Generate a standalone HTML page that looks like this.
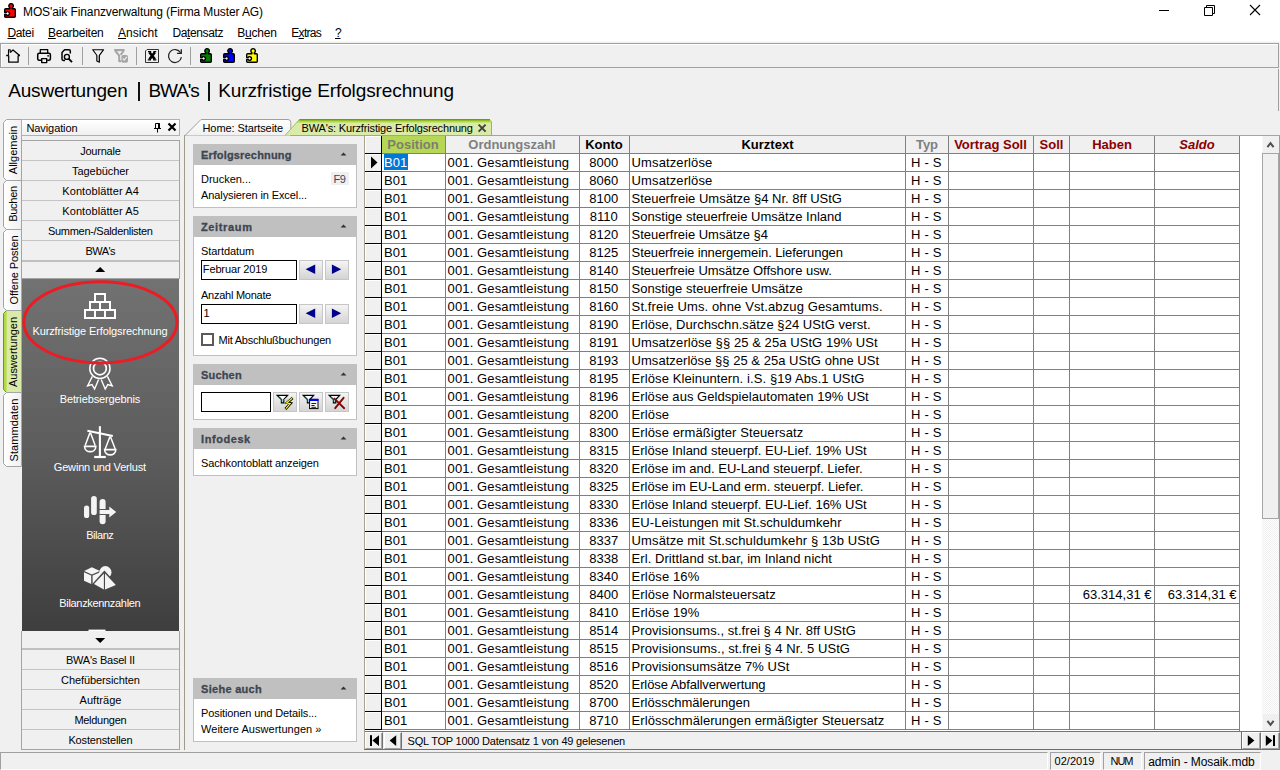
<!DOCTYPE html>
<html><head><meta charset="utf-8"><title>MOS'aik Finanzverwaltung</title>
<style>
html,body{margin:0;padding:0;}
body{width:1280px;height:770px;overflow:hidden;background:#f0f0f0;position:relative;font-family:"Liberation Sans",sans-serif;}
.a{position:absolute;box-sizing:border-box;}
span.t{position:absolute;white-space:pre;line-height:normal;font-family:"Liberation Sans",sans-serif;}
.sbh{left:193px;width:164px;background:#c0c0c0;}
.sbb{left:193px;width:164px;background:#fff;border:1px solid #c0c0c0;border-top:none;}
.hl{left:365px;width:875px;height:1px;background:#808080;}
.vl{top:136px;width:1px;height:595px;background:#808080;}
.btn{background:linear-gradient(#f4f4f4,#d4d4d4);border:1px solid #c6c6c6;}
.inp{background:#fff;border:1px solid #000;}
</style></head><body>
<!-- title + menu -->
<div class="a" style="left:0;top:0;width:1280px;height:41px;background:#fff"></div>
<div class="a" style="left:0;top:41px;width:1280px;height:1px;background:#f8f8f8"></div>
<!-- toolbar frame -->
<div class="a" style="left:0;top:43px;width:1279px;height:25px;border:1px solid #a0a0a0;background:#f0f0f0;box-shadow:inset 1px 1px 0 #fff"></div>
<!-- header title panel right edge -->
<div class="a" style="left:1278px;top:69px;width:1px;height:42px;background:#a0a0a0"></div>
<!-- app icon -->
<svg class="a" style="left:4px;top:3px" width="13" height="16" viewBox="0 0 13 16"><path d="M1.7 5.7H5.9V4.8A2.25 2.25 0 1 1 8.3 4.8V5.7H10.3Q11.3 5.7 11.3 6.7V13.3Q11.3 14.3 10.3 14.3H1.7Q0.7 14.3 0.7 13.3V11.5H2.1A1.85 1.85 0 1 0 2.1 9.5H0.7V6.7Q0.7 5.7 1.7 5.7Z" fill="#f00" stroke="#000" stroke-width="1.4" stroke-linejoin="round"/></svg>
<!-- window controls -->
<svg class="a" style="left:1150px;top:0" width="120" height="22" viewBox="0 0 120 22">
 <path d="M9 10.5H19" stroke="#000" stroke-width="1"/>
 <path d="M54.5 7.5H62.5V15.5H54.5zM56.5 7.5V5.5H64.5V13.5H62.5" fill="none" stroke="#000" stroke-width="1"/>
 <path d="M100 5L110 15M110 5L100 15" stroke="#000" stroke-width="1.1"/>
</svg>
<!-- toolbar icons -->
<svg class="a" style="left:0;top:44px" width="280" height="23" viewBox="0 0 280 23">
 <g fill="none" stroke="#000" stroke-linejoin="round">
  <!-- home -->
  <path d="M8.7 11.4V18.2H18.1V11.4" stroke-width="1.25"/><path d="M6.2 11.5H8.7M18.1 11.5H19.9" stroke-width="1.3"/><path d="M8.5 11.4V5.8H10.2V8.4" stroke-width="1.1"/><path d="M10.3 8.5L13 5.9L19.6 11.4" stroke-width="1.3"/>
  <!-- sep -->
  <path d="M28.5 3V21M82.5 3V21M136.5 3V21M190.5 3V21" stroke="#a0a0a0" stroke-width="1"/>
  <!-- printer -->
  <path d="M40.3 9.2V5.7H47.7V9.2" stroke-width="1.3"/><path d="M41 16.3H39.2Q37.7 16.3 37.7 14.8V10.7Q37.7 9.2 39.2 9.2H48.9Q50.4 9.2 50.4 10.7V14.8Q50.4 16.3 48.9 16.3H47.2" stroke-width="1.5"/><rect x="41.7" y="14.6" width="5" height="4" fill="#f0f0f0" stroke-width="1.4"/><circle cx="48.1" cy="11.8" r="0.9" fill="#000" stroke="none"/>
  <!-- preview -->
  <path d="M65 16.4H63.4Q62 16.4 62 15V8.4L64.6 5.7H69Q70.3 5.7 70.3 7V9.6" stroke-width="1.5"/><circle cx="66.9" cy="12.9" r="2.5" stroke-width="1.4"/><path d="M68.8 14.8L72 18.2" stroke-width="1.9"/>
  <!-- funnel -->
  <path d="M97.4 11.6H98.8V17.6L97.4 17z" fill="#b4b4b4" stroke="none"/><path d="M92.7 5.7H103.6L99.4 11.3V18.3L96.8 17.1V11.3z" stroke-width="1.1"/>
  <!-- disabled funnel -->
  <g stroke="#a6a6a6"><path d="M114.2 6.1H124.6" stroke-width="2.2"/><path d="M115.4 7L119.2 11.6V17.2H121.6M123.6 7L120.6 10.8" stroke-width="2"/><rect x="121.4" y="11.1" width="6.6" height="7.6" rx="1.8" fill="#a6a6a6" stroke="none"/><path d="M122.8 14.6L124.2 16L126.8 12.8" stroke="#f4f4f4" stroke-width="1.1"/></g>
  <!-- X box -->
  <path d="M147 5.5H158.5V18.5H145.5V7z" stroke="#303030" stroke-width="1" fill="#f0f0f0"/><path d="M149.4 8.2L154.9 15.4M154.9 8.2L149.4 15.4" stroke-width="2.6" stroke-linejoin="miter"/><path d="M148 7.7H151.2M153.4 7.7H156.2M147.8 15.9H151M153.2 15.9H156.4" stroke-width="1.2"/>
  <!-- refresh -->
  <path d="M181.4 13.1A6.5 6.5 0 1 1 180.6 8.75" stroke="#222" stroke-width="1.2"/><path d="M181.3 5.2V9.4H177" stroke="#222" stroke-width="1.3" stroke-linejoin="miter"/>
 </g>
 <!-- puzzles -->
 <g stroke="#000" stroke-width="1.4" stroke-linejoin="round">
  <path d="M1.7 5.7H5.9V4.8A2.25 2.25 0 1 1 8.3 4.8V5.7H10.3Q11.3 5.7 11.3 6.7V13.3Q11.3 14.3 10.3 14.3H1.7Q0.7 14.3 0.7 13.3V11.5H2.1A1.85 1.85 0 1 0 2.1 9.5H0.7V6.7Q0.7 5.7 1.7 5.7Z" fill="#008000" transform="translate(200,4)"/>
  <path d="M1.7 5.7H5.9V4.8A2.25 2.25 0 1 1 8.3 4.8V5.7H10.3Q11.3 5.7 11.3 6.7V13.3Q11.3 14.3 10.3 14.3H1.7Q0.7 14.3 0.7 13.3V11.5H2.1A1.85 1.85 0 1 0 2.1 9.5H0.7V6.7Q0.7 5.7 1.7 5.7Z" fill="#0000ff" transform="translate(223,4)"/>
  <path d="M1.7 5.7H5.9V4.8A2.25 2.25 0 1 1 8.3 4.8V5.7H10.3Q11.3 5.7 11.3 6.7V13.3Q11.3 14.3 10.3 14.3H1.7Q0.7 14.3 0.7 13.3V11.5H2.1A1.85 1.85 0 1 0 2.1 9.5H0.7V6.7Q0.7 5.7 1.7 5.7Z" fill="#ffff00" transform="translate(246,4)"/>
 </g>
</svg>
<!-- title separators -->
<div class="a" style="left:138px;top:82px;width:2px;height:19px;background:#111"></div>
<div class="a" style="left:208px;top:82px;width:2px;height:19px;background:#111"></div>

<!-- vertical tabs -->
<svg class="a" style="left:0;top:116px" width="23" height="354" viewBox="0 116 23 354">
<defs><linearGradient id="vt" x1="0" y1="0" x2="1" y2="0"><stop offset="0" stop-color="#fff"/><stop offset="1" stop-color="#f0f0f0"/></linearGradient></defs>
<path d="M21.5 119.5H6.5L3.5 122.5V177.5L6.5 180.5H21.5z" fill="url(#vt)"/>
<path d="M21.5 119.5H6.5L3.5 122.5V177.5L6.5 180.5H21.5" fill="none" stroke="#a4a4a4" stroke-width="1"/>
<path d="M21.5 180.5H6.5L3.5 183.5V226.5L6.5 229.5H21.5z" fill="url(#vt)"/>
<path d="M21.5 180.5H6.5L3.5 183.5V226.5L6.5 229.5H21.5" fill="none" stroke="#a4a4a4" stroke-width="1"/>
<path d="M21.5 229.5H6.5L3.5 232.5V307.5L6.5 310.5H21.5z" fill="url(#vt)"/>
<path d="M21.5 229.5H6.5L3.5 232.5V307.5L6.5 310.5H21.5" fill="none" stroke="#a4a4a4" stroke-width="1"/>
<path d="M21.5 310.5H6.5L3.5 313.5V389.5L6.5 392.5H21.5z" fill="#daeaa8"/>
<path d="M6.6 311.0L4 313.7V389.3L6.6 392.0z" fill="#b2d944"/>
<path d="M6.5 310.5L3.5 313.5V389.5L6.5 392.5" fill="none" stroke="#6a9f00" stroke-width="1"/>
<path d="M21.5 310.5H6.5M6.5 392.5H21.5" fill="none" stroke="#a4a4a4" stroke-width="1"/>
<path d="M21.5 392.5H6.5L3.5 395.5V463.5L6.5 466.5H21.5z" fill="url(#vt)"/>
<path d="M21.5 392.5H6.5L3.5 395.5V463.5L6.5 466.5H21.5" fill="none" stroke="#a4a4a4" stroke-width="1"/>
</svg>
<div class="a" style="left:21px;top:119px;width:1px;height:347px;background:#a8a8a8"></div>
<!-- nav header -->
<div class="a" style="left:21px;top:119px;width:159px;height:17px;border:1px solid #b0b0b0;background:linear-gradient(#fff,#f0f0f0)"></div>
<!-- pin + close -->
<svg class="a" style="left:152px;top:122px" width="26" height="12" viewBox="0 0 26 12">
 <path d="M3.5 1.5h4v5h-4zM2 6.5h7M5.5 6.5v4" fill="none" stroke="#000" stroke-width="1"/><rect x="6" y="1" width="1.6" height="5.5" fill="#000"/>
 <path d="M16.5 1.5l7 7M23.5 1.5l-7 7" stroke="#000" stroke-width="2.2" fill="none"/>
</svg>
<!-- buttons top -->
<div class="a" style="left:21px;top:140px;width:159px;height:139px;border:1px solid #a4a4a4;background:#f0f0f0"></div>
<div class="a" style="left:22px;top:160px;width:157px;height:1px;background:#c4c4c4"></div>
<div class="a" style="left:22px;top:180px;width:157px;height:1px;background:#c4c4c4"></div>
<div class="a" style="left:22px;top:200px;width:157px;height:1px;background:#c4c4c4"></div>
<div class="a" style="left:22px;top:220px;width:157px;height:1px;background:#c4c4c4"></div>
<div class="a" style="left:22px;top:240px;width:157px;height:1px;background:#c4c4c4"></div>
<div class="a" style="left:22px;top:260px;width:157px;height:2px;background:#c0c0c0"></div>
<svg class="a" style="left:94px;top:266px" width="12" height="7"><path d="M1.2 5.9L6.2 0.9L11.2 5.9z" fill="#000"/></svg>
<!-- dark panel -->
<div class="a" style="left:22px;top:279px;width:157px;height:352px;background:linear-gradient(#727272,#5c5c5c 50%,#3e3e3e)"></div>
<svg class="a" style="left:22px;top:279px" width="158" height="352" viewBox="22 279 158 352">
 <!-- boxes pyramid -->
 <g fill="none" stroke="#fff" stroke-width="2">
  <rect x="95" y="294" width="10" height="8"/>
  <rect x="90" y="302" width="10" height="8"/><rect x="100" y="302" width="10" height="8"/>
  <rect x="85" y="310" width="10" height="8"/><rect x="95" y="310" width="10" height="8"/><rect x="105" y="310" width="10" height="8"/>
 </g>
 <!-- award -->
 <g fill="none" stroke="#fff">
  <circle cx="99.9" cy="368.4" r="10.1" stroke-width="1.5"/>
  <circle cx="99.9" cy="368.4" r="6.4" stroke-width="1.7"/>
  <path d="M92.4 376.4L87.6 385.8L92 384.6L94.6 389L98.6 379.6" stroke-width="1.4" stroke-linejoin="miter"/>
  <path d="M107.4 376.4L112.2 385.8L107.8 384.6L105.2 389L101.2 379.6" stroke-width="1.4" stroke-linejoin="miter"/>
 </g>
 <!-- scales -->
 <g fill="none" stroke="#fff" stroke-width="1.7">
  <path d="M99.9 426.2V456" stroke-width="2.1"/>
  <path d="M94.2 457H105.8" stroke-width="2.2"/>
  <path d="M87.4 430.8L112.8 436" stroke-width="2"/>
  <path d="M90 432.5L85.2 445.6M90.4 432.5L95.2 445.6" stroke-width="1.5"/>
  <path d="M84.6 446.4H95.8C95.8 453.4 84.6 453.4 84.6 446.4z" stroke-width="1.6"/>
  <path d="M110 436.6L105.2 449M110.4 436.6L115.2 449" stroke-width="1.5"/>
  <path d="M104.6 449.6H115.8C115.8 456.6 104.6 456.6 104.6 449.6z" stroke-width="1.6"/>
 </g>
 <!-- bilanz -->
 <g fill="#f4f4f4">
  <rect x="84" y="505.5" width="5.2" height="12.6" rx="2.6"/>
  <rect x="91.1" y="496" width="5.7" height="19" rx="2.85"/>
  <rect x="99.6" y="499" width="6" height="25.3" rx="3"/>
  <path d="M98.6 509V515H108.6V518.6L117 512L108.6 505.4V509z" fill="#565656"/>
  <path d="M99.6 510V514H109.3V517.4L116.2 512L109.3 506.6V510z"/>
 </g>
 <!-- bilanzkennzahlen -->
 <g fill="#f4f4f4">
  <path d="M84.2 571L91.8 567.2L100 571L91.8 574.6z"/>
  <path d="M84 572.2L91.2 575.6V584L84 580.8z"/>
  <path d="M92.6 575.6L100.2 572.2V581L92.6 584z"/>
  <circle cx="105.4" cy="572.2" r="6.1"/>
  <path d="M104.4 570.6L91.8 584.6L104.4 591.4L117.8 585.2z" fill="#484848"/>
  <path d="M103.9 573.6L94 584L103.9 589.4z"/>
  <path d="M105 573.6L115.8 585L105 589.6z"/>
 </g>
 <!-- next icon peek -->
 <rect x="88.5" y="629.6" width="17" height="1.4" fill="#fff"/>
 <!-- red ellipse annotation -->
 <ellipse cx="100.4" cy="322.3" rx="76.6" ry="40.6" fill="none" stroke="#ed1c24" stroke-width="3"/>
</svg>

<!-- lower buttons -->
<div class="a" style="left:21px;top:631px;width:159px;height:119px;border:1px solid #a4a4a4;border-top:none;background:#f0f0f0"></div>
<div class="a" style="left:22px;top:648px;width:157px;height:2px;background:#c0c0c0"></div>
<div class="a" style="left:22px;top:669px;width:157px;height:1px;background:#c4c4c4"></div>
<div class="a" style="left:22px;top:689px;width:157px;height:1px;background:#c4c4c4"></div>
<div class="a" style="left:22px;top:709px;width:157px;height:1px;background:#c4c4c4"></div>
<div class="a" style="left:22px;top:729px;width:157px;height:1px;background:#c4c4c4"></div>
<svg class="a" style="left:94px;top:637px" width="12" height="7"><path d="M1.2 0.9L6.2 5.9L11.2 0.9z" fill="#000"/></svg>

<!-- content frame -->
<div class="a" style="left:184px;top:135px;width:1096px;height:615px;border-left:1px solid #a09c8a;border-top:1px solid #a8a498;background:#f0f0f0"></div>
<!-- tabs -->
<svg class="a" style="left:184px;top:118px" width="320" height="19" viewBox="0 0 320 19">
 <defs><linearGradient id="tg" x1="0" y1="0" x2="0" y2="1"><stop offset="0" stop-color="#fff"/><stop offset="1" stop-color="#f0f0f0"/></linearGradient></defs>
 <path d="M1 17.5L17 1.5H106.5V17.5z" fill="url(#tg)"/>
 <path d="M1 17.5L17 1.5H104Q106.8 1.5 106.8 4.5V17.5" fill="none" stroke="#a0a09a" stroke-width="1"/>
 <path d="M101 17L115.6 1H305.6L308 3.6V17z" fill="#daeaa8"/>
 <path d="M113.8 3L115.6 1H305.6L308 3.6V4.4H112.4z" fill="#b2d944"/>
 <path d="M101 17.5L115.4 1.5" fill="none" stroke="#a4c45c" stroke-width="1"/>
 <path d="M307.5 4V17.5" fill="none" stroke="#a4a4a0" stroke-width="1"/>
 <path d="M115.4 1.7H306" stroke="#6a9f00" stroke-width="1.6"/>
 <path d="M294.6 6.6l7 7M301.6 6.6l-7 7" stroke="#404040" stroke-width="1.9" fill="none"/>
</svg>
<!-- side boxes -->
<div class="a sbh" style="top:144px;height:21px"></div><div class="a sbb" style="top:165px;height:43px"></div>
<div class="a sbh" style="top:216px;height:21px"></div><div class="a sbb" style="top:237px;height:119px"></div>
<div class="a sbh" style="top:364px;height:21px"></div><div class="a sbb" style="top:385px;height:35px"></div>
<div class="a sbh" style="top:428px;height:21px"></div><div class="a sbb" style="top:449px;height:27px"></div>
<div class="a sbh" style="top:678px;height:21px"></div><div class="a sbb" style="top:699px;height:43px"></div>
<!-- header arrows -->
<svg class="a" style="left:340px;top:152px" width="7" height="4"><path d="M0.6 3.6L3.5 0.4L6.4 3.6z" fill="#303030"/></svg>
<svg class="a" style="left:340px;top:224px" width="7" height="4"><path d="M0.6 3.6L3.5 0.4L6.4 3.6z" fill="#303030"/></svg>
<svg class="a" style="left:340px;top:372px" width="7" height="4"><path d="M0.6 3.6L3.5 0.4L6.4 3.6z" fill="#303030"/></svg>
<svg class="a" style="left:340px;top:436px" width="7" height="4"><path d="M0.6 3.6L3.5 0.4L6.4 3.6z" fill="#303030"/></svg>
<svg class="a" style="left:340px;top:686px" width="7" height="4"><path d="M0.6 3.6L3.5 0.4L6.4 3.6z" fill="#303030"/></svg>
<!-- F9 -->
<div class="a" style="left:331px;top:172px;width:18px;height:13px;background:#efefef"></div>
<!-- Zeitraum inputs -->
<div class="a inp" style="left:201px;top:260px;width:96px;height:20px"></div>
<div class="a btn" style="left:299px;top:260px;width:24px;height:20px"></div>
<div class="a btn" style="left:325px;top:260px;width:24px;height:20px"></div>
<div class="a inp" style="left:201px;top:304px;width:96px;height:20px"></div>
<div class="a btn" style="left:299px;top:304px;width:24px;height:20px"></div>
<div class="a btn" style="left:325px;top:304px;width:24px;height:20px"></div>
<svg class="a" style="left:299px;top:260px" width="50" height="20"><path d="M6.6 9.2L16.2 4.4V14zM42.2 9.2L32.9 4.4V14z" fill="#00008b"/></svg>
<svg class="a" style="left:299px;top:304px" width="50" height="20"><path d="M6.6 9.2L16.2 4.4V14zM42.2 9.2L32.9 4.4V14z" fill="#00008b"/></svg>
<!-- checkbox -->
<div class="a" style="left:201px;top:333px;width:13px;height:13px;border:2px solid #5a5a5a;background:#fff"></div>
<!-- Suchen -->
<div class="a inp" style="left:201px;top:392px;width:70px;height:20px"></div>
<div class="a btn" style="left:273px;top:392px;width:24px;height:20px"></div>
<div class="a btn" style="left:299px;top:392px;width:24px;height:20px"></div>
<div class="a btn" style="left:325px;top:392px;width:24px;height:20px"></div>
<svg class="a" style="left:273px;top:392px" width="76" height="20" viewBox="273 392 76 20">
 <g transform="translate(277.2,395.4)"><path d="M0 0H10.4L6.6 4.2V7.4H4.2V4.2z" fill="#fff" stroke="#000" stroke-width="1.2" stroke-linejoin="miter"/><path d="M2.2 1.2L4.9 4.2V6.6" fill="none" stroke="#30b8b8" stroke-width="1"/></g>
 <path d="M292.6 398L287.2 402.8L290.6 403.4L285.4 409" fill="none" stroke="#000" stroke-width="2.6" stroke-linejoin="miter"/>
 <path d="M292.2 398.2L286.6 402.9L290.2 403.6L285.8 408.6" fill="none" stroke="#ffff00" stroke-width="1.2" stroke-linejoin="miter"/>
 <path d="M286.4 397.6L283.8 400.4M288 398.6L285.6 401" stroke="#b0b0b0" stroke-width="0.8"/>
 <g transform="translate(303.2,395.4)"><path d="M0 0H10.4L6.6 4.2V7.4H4.2V4.2z" fill="#fff" stroke="#000" stroke-width="1.2" stroke-linejoin="miter"/><path d="M2.2 1.2L4.9 4.2V6.6" fill="none" stroke="#30b8b8" stroke-width="1"/></g>
 <rect x="309.6" y="399.4" width="8.4" height="9.2" fill="#fff" stroke="#000" stroke-width="1"/>
 <rect x="309.2" y="398.8" width="9.2" height="2.2" fill="#0000ff"/>
 <path d="M311.4 403.5H316.2M311.4 405.5H314.6M311.4 407.3H316.2" stroke="#000" stroke-width="0.9"/>
 <g transform="translate(329.2,395.4)"><path d="M0 0H10.4L6.6 4.2V7.4H4.2V4.2z" fill="#fff" stroke="#000" stroke-width="1.2" stroke-linejoin="miter"/><path d="M2.2 1.2L4.9 4.2V6.6" fill="none" stroke="#30b8b8" stroke-width="1"/></g>
 <path d="M334.4 398.6L344.2 408.2M343.6 397.8L335.2 408.2" stroke="#8b0000" stroke-width="1.9" stroke-linecap="round"/>
</svg>


<div class="a" style="left:365px;top:136px;width:898px;height:596px;background:#fff"></div>
<div class="a" style="left:364px;top:136px;width:1px;height:614px;background:#a8a494"></div>
<div class="a" style="left:365px;top:136px;width:875px;height:17px;background:#f0f0f0"></div>
<div class="a" style="left:382px;top:136px;width:63px;height:17px;background:#b6d756"></div>
<div class="a" style="left:365px;top:136px;width:16px;height:596px;background:#f0f0f0;border-left:1px solid #fff"></div>
<div class="a" style="left:381px;top:136px;width:1px;height:596px;background:#000"></div>
<div class="a hl" style="top:153px"></div>
<div class="a" style="left:365px;top:153px;width:17px;height:1px;background:#000"></div>
<div class="a" style="left:366px;top:154px;width:15px;height:1px;background:#fff"></div>
<div class="a hl" style="top:171px"></div>
<div class="a" style="left:365px;top:171px;width:17px;height:1px;background:#000"></div>
<div class="a" style="left:366px;top:172px;width:15px;height:1px;background:#fff"></div>
<div class="a hl" style="top:189px"></div>
<div class="a" style="left:365px;top:189px;width:17px;height:1px;background:#000"></div>
<div class="a" style="left:366px;top:190px;width:15px;height:1px;background:#fff"></div>
<div class="a hl" style="top:207px"></div>
<div class="a" style="left:365px;top:207px;width:17px;height:1px;background:#000"></div>
<div class="a" style="left:366px;top:208px;width:15px;height:1px;background:#fff"></div>
<div class="a hl" style="top:225px"></div>
<div class="a" style="left:365px;top:225px;width:17px;height:1px;background:#000"></div>
<div class="a" style="left:366px;top:226px;width:15px;height:1px;background:#fff"></div>
<div class="a hl" style="top:243px"></div>
<div class="a" style="left:365px;top:243px;width:17px;height:1px;background:#000"></div>
<div class="a" style="left:366px;top:244px;width:15px;height:1px;background:#fff"></div>
<div class="a hl" style="top:261px"></div>
<div class="a" style="left:365px;top:261px;width:17px;height:1px;background:#000"></div>
<div class="a" style="left:366px;top:262px;width:15px;height:1px;background:#fff"></div>
<div class="a hl" style="top:279px"></div>
<div class="a" style="left:365px;top:279px;width:17px;height:1px;background:#000"></div>
<div class="a" style="left:366px;top:280px;width:15px;height:1px;background:#fff"></div>
<div class="a hl" style="top:297px"></div>
<div class="a" style="left:365px;top:297px;width:17px;height:1px;background:#000"></div>
<div class="a" style="left:366px;top:298px;width:15px;height:1px;background:#fff"></div>
<div class="a hl" style="top:315px"></div>
<div class="a" style="left:365px;top:315px;width:17px;height:1px;background:#000"></div>
<div class="a" style="left:366px;top:316px;width:15px;height:1px;background:#fff"></div>
<div class="a hl" style="top:333px"></div>
<div class="a" style="left:365px;top:333px;width:17px;height:1px;background:#000"></div>
<div class="a" style="left:366px;top:334px;width:15px;height:1px;background:#fff"></div>
<div class="a hl" style="top:351px"></div>
<div class="a" style="left:365px;top:351px;width:17px;height:1px;background:#000"></div>
<div class="a" style="left:366px;top:352px;width:15px;height:1px;background:#fff"></div>
<div class="a hl" style="top:369px"></div>
<div class="a" style="left:365px;top:369px;width:17px;height:1px;background:#000"></div>
<div class="a" style="left:366px;top:370px;width:15px;height:1px;background:#fff"></div>
<div class="a hl" style="top:387px"></div>
<div class="a" style="left:365px;top:387px;width:17px;height:1px;background:#000"></div>
<div class="a" style="left:366px;top:388px;width:15px;height:1px;background:#fff"></div>
<div class="a hl" style="top:405px"></div>
<div class="a" style="left:365px;top:405px;width:17px;height:1px;background:#000"></div>
<div class="a" style="left:366px;top:406px;width:15px;height:1px;background:#fff"></div>
<div class="a hl" style="top:423px"></div>
<div class="a" style="left:365px;top:423px;width:17px;height:1px;background:#000"></div>
<div class="a" style="left:366px;top:424px;width:15px;height:1px;background:#fff"></div>
<div class="a hl" style="top:441px"></div>
<div class="a" style="left:365px;top:441px;width:17px;height:1px;background:#000"></div>
<div class="a" style="left:366px;top:442px;width:15px;height:1px;background:#fff"></div>
<div class="a hl" style="top:459px"></div>
<div class="a" style="left:365px;top:459px;width:17px;height:1px;background:#000"></div>
<div class="a" style="left:366px;top:460px;width:15px;height:1px;background:#fff"></div>
<div class="a hl" style="top:477px"></div>
<div class="a" style="left:365px;top:477px;width:17px;height:1px;background:#000"></div>
<div class="a" style="left:366px;top:478px;width:15px;height:1px;background:#fff"></div>
<div class="a hl" style="top:495px"></div>
<div class="a" style="left:365px;top:495px;width:17px;height:1px;background:#000"></div>
<div class="a" style="left:366px;top:496px;width:15px;height:1px;background:#fff"></div>
<div class="a hl" style="top:513px"></div>
<div class="a" style="left:365px;top:513px;width:17px;height:1px;background:#000"></div>
<div class="a" style="left:366px;top:514px;width:15px;height:1px;background:#fff"></div>
<div class="a hl" style="top:531px"></div>
<div class="a" style="left:365px;top:531px;width:17px;height:1px;background:#000"></div>
<div class="a" style="left:366px;top:532px;width:15px;height:1px;background:#fff"></div>
<div class="a hl" style="top:549px"></div>
<div class="a" style="left:365px;top:549px;width:17px;height:1px;background:#000"></div>
<div class="a" style="left:366px;top:550px;width:15px;height:1px;background:#fff"></div>
<div class="a hl" style="top:567px"></div>
<div class="a" style="left:365px;top:567px;width:17px;height:1px;background:#000"></div>
<div class="a" style="left:366px;top:568px;width:15px;height:1px;background:#fff"></div>
<div class="a hl" style="top:585px"></div>
<div class="a" style="left:365px;top:585px;width:17px;height:1px;background:#000"></div>
<div class="a" style="left:366px;top:586px;width:15px;height:1px;background:#fff"></div>
<div class="a hl" style="top:603px"></div>
<div class="a" style="left:365px;top:603px;width:17px;height:1px;background:#000"></div>
<div class="a" style="left:366px;top:604px;width:15px;height:1px;background:#fff"></div>
<div class="a hl" style="top:621px"></div>
<div class="a" style="left:365px;top:621px;width:17px;height:1px;background:#000"></div>
<div class="a" style="left:366px;top:622px;width:15px;height:1px;background:#fff"></div>
<div class="a hl" style="top:639px"></div>
<div class="a" style="left:365px;top:639px;width:17px;height:1px;background:#000"></div>
<div class="a" style="left:366px;top:640px;width:15px;height:1px;background:#fff"></div>
<div class="a hl" style="top:657px"></div>
<div class="a" style="left:365px;top:657px;width:17px;height:1px;background:#000"></div>
<div class="a" style="left:366px;top:658px;width:15px;height:1px;background:#fff"></div>
<div class="a hl" style="top:675px"></div>
<div class="a" style="left:365px;top:675px;width:17px;height:1px;background:#000"></div>
<div class="a" style="left:366px;top:676px;width:15px;height:1px;background:#fff"></div>
<div class="a hl" style="top:693px"></div>
<div class="a" style="left:365px;top:693px;width:17px;height:1px;background:#000"></div>
<div class="a" style="left:366px;top:694px;width:15px;height:1px;background:#fff"></div>
<div class="a hl" style="top:711px"></div>
<div class="a" style="left:365px;top:711px;width:17px;height:1px;background:#000"></div>
<div class="a" style="left:366px;top:712px;width:15px;height:1px;background:#fff"></div>
<div class="a hl" style="top:729px"></div>
<div class="a" style="left:365px;top:729px;width:17px;height:1px;background:#000"></div>
<div class="a" style="left:366px;top:730px;width:15px;height:1px;background:#fff"></div>
<div class="a" style="left:366px;top:136px;width:15px;height:1px;background:#fff"></div>
<div class="a vl" style="left:445px"></div>
<div class="a vl" style="left:579px"></div>
<div class="a vl" style="left:629px"></div>
<div class="a vl" style="left:905px"></div>
<div class="a vl" style="left:948px"></div>
<div class="a vl" style="left:1033px"></div>
<div class="a vl" style="left:1069px"></div>
<div class="a vl" style="left:1154px"></div>
<div class="a vl" style="left:1239px"></div>
<div class="a" style="left:1239px;top:731px;width:1px;height:1px;background:#808080"></div>
<div class="a" style="left:384px;top:154px;width:24px;height:16px;background:#0078d7"></div>
<svg class="a" style="left:371px;top:156px" width="7" height="13"><path d="M0 0.5L6.5 6.5L0 12.5z" fill="#000"/></svg>
<div class="a" style="left:1262px;top:136px;width:17px;height:596px;background:conic-gradient(#fff 25%,#f0f0f0 0 50%,#fff 0 75%,#f0f0f0 0) 0 0/2px 2px"></div>
<div class="a" style="left:1263px;top:714px;width:16px;height:17px;background:#f0f0f0"></div>
<div class="a" style="left:1263px;top:136px;width:16px;height:17px;background:#f0f0f0"></div>
<div class="a" style="left:1262px;top:153px;width:17px;height:366px;background:#f0f0f0;border:1px solid #a6a6a6"></div>
<svg class="a" style="left:1266px;top:140px" width="10" height="9"><path d="M1.4 7.2L4.5 3.2L7.6 7.2" fill="none" stroke="#505050" stroke-width="2"/></svg>
<svg class="a" style="left:1266px;top:718px" width="10" height="10"><path d="M1.4 2.8L4.5 6.8L7.6 2.8" fill="none" stroke="#505050" stroke-width="2"/></svg>
<div class="a" style="left:1279px;top:136px;width:1px;height:595px;background:#a0a090"></div>
<div class="a" style="left:365px;top:730px;width:874px;height:1px;background:#fff"></div>
<div class="a" style="left:365px;top:731px;width:915px;height:1px;background:#747474"></div>
<div class="a" style="left:365px;top:732px;width:915px;height:17px;background:#f0f0f0"></div>
<div class="a" style="left:364px;top:749px;width:916px;height:1px;background:#6e6e6e"></div>
<div class="a" style="left:1241px;top:732px;width:1px;height:17px;background:#707070"></div>
<div class="a" style="left:365px;top:732px;width:18px;height:17px;background:#f0f0f0;border-left:1px solid #fff;border-top:1px solid #fff;border-right:1px solid #707070;border-bottom:1px solid #a0a0a0;box-shadow:inset -1px 0 0 #a8a8a8"></div>
<div class="a" style="left:384px;top:732px;width:18px;height:17px;background:#f0f0f0;border-left:1px solid #fff;border-top:1px solid #fff;border-right:1px solid #707070;border-bottom:1px solid #a0a0a0;box-shadow:inset -1px 0 0 #a8a8a8"></div>
<div class="a" style="left:1242px;top:732px;width:19px;height:17px;background:#f0f0f0;border-left:1px solid #fff;border-top:1px solid #fff;border-right:1px solid #707070;border-bottom:1px solid #a0a0a0;box-shadow:inset -1px 0 0 #a8a8a8"></div>
<div class="a" style="left:1261px;top:732px;width:19px;height:17px;background:#f0f0f0;border-left:1px solid #fff;border-top:1px solid #fff;border-right:1px solid #707070;border-bottom:1px solid #a0a0a0;box-shadow:inset -1px 0 0 #a8a8a8"></div>
<svg class="a" style="left:365px;top:732px" width="37" height="18"><rect x="5" y="3.2" width="2" height="10.8" fill="#000"/><path d="M7.4 8.6L14 3.2V14zM24.6 8.6L31.2 3.2V14z" fill="#000"/></svg>
<svg class="a" style="left:1242px;top:732px" width="38" height="18"><path d="M12.4 8.6L5.8 3.2V14zM30.4 8.6L23.8 3.2V14z" fill="#000"/><rect x="31" y="3.2" width="2" height="10.8" fill="#000"/></svg>
<div class="a" style="left:0;top:752px;width:1048px;height:18px;border-top:1px solid #a0a0a0;border-left:1px solid #a0a0a0;border-bottom:1px solid #fff;border-right:1px solid #fff"></div>
<div class="a" style="left:1050px;top:752px;width:51px;height:18px;border-top:1px solid #a0a0a0;border-left:1px solid #a0a0a0;border-bottom:1px solid #fff;border-right:1px solid #fff"></div>
<div class="a" style="left:1103px;top:752px;width:39px;height:18px;border-top:1px solid #a0a0a0;border-left:1px solid #a0a0a0;border-bottom:1px solid #fff;border-right:1px solid #fff"></div>
<div class="a" style="left:1144px;top:752px;width:117px;height:18px;border-top:1px solid #a0a0a0;border-left:1px solid #a0a0a0;border-bottom:1px solid #fff;border-right:1px solid #fff"></div>

<span class="t" id="t0" style="font-size:12px;color:#000;letter-spacing:-0.104px;left:23px;top:5px;">MOS&#x27;aik Finanzverwaltung (Firma Muster AG)</span>
<span class="t" id="t1" style="font-size:12px;color:#000;letter-spacing:-0.366px;left:7.5px;top:26px;"><u>D</u>atei</span>
<span class="t" id="t2" style="font-size:12px;color:#000;letter-spacing:-0.256px;left:48px;top:26px;"><u>B</u>earbeiten</span>
<span class="t" id="t3" style="font-size:12px;color:#000;letter-spacing:0.018px;left:118px;top:26px;"><u>A</u>nsicht</span>
<span class="t" id="t4" style="font-size:12px;color:#000;letter-spacing:-0.394px;left:172.5px;top:26px;">Da<u>t</u>ensatz</span>
<span class="t" id="t5" style="font-size:12px;color:#000;letter-spacing:-0.222px;left:237.3px;top:26px;">B<u>u</u>chen</span>
<span class="t" id="t6" style="font-size:12px;color:#000;letter-spacing:-0.722px;left:291.3px;top:26px;">E<u>x</u>tras</span>
<span class="t" id="t7" style="font-size:12px;color:#000;letter-spacing:-1.188px;left:335px;top:26px;"><u>?</u></span>
<span class="t" id="t8" style="font-size:19px;color:#000;letter-spacing:-0.172px;left:8.2px;top:80px;">Auswertungen</span>
<span class="t" id="t9" style="font-size:19px;color:#000;letter-spacing:-1.081px;left:148.4px;top:80px;">BWA&#x27;s</span>
<span class="t" id="t10" style="font-size:19px;color:#000;letter-spacing:-0.103px;left:218.2px;top:80px;">Kurzfristige Erfolgsrechnung</span>
<span class="t" id="t11" style="font-size:11px;color:#000;letter-spacing:-0.098px;left:26.5px;top:121.8px;">Navigation</span>
<span class="t" id="t12" style="font-size:11px;color:#000;letter-spacing:-0.238px;left:80.23px;top:144.5px;">Journale</span>
<span class="t" id="t13" style="font-size:11px;color:#000;letter-spacing:-0.08px;left:72.11px;top:164.5px;">Tagebücher</span>
<span class="t" id="t14" style="font-size:11px;color:#000;letter-spacing:0.091px;left:62.25px;top:184.5px;">Kontoblätter A4</span>
<span class="t" id="t15" style="font-size:11px;color:#000;letter-spacing:0.091px;left:62.25px;top:204.5px;">Kontoblätter A5</span>
<span class="t" id="t16" style="font-size:11px;color:#000;letter-spacing:-0.299px;left:48.0px;top:224.5px;">Summen-/Saldenlisten</span>
<span class="t" id="t17" style="font-size:11px;color:#000;letter-spacing:-0.51px;left:85.4px;top:244.5px;">BWA&#x27;s</span>
<span class="t" id="t18" style="font-size:11px;color:#000;letter-spacing:-0.221px;left:65.94px;top:654px;">BWA&#x27;s Basel II</span>
<span class="t" id="t19" style="font-size:11px;color:#000;letter-spacing:-0.087px;left:61.06px;top:674px;">Chefübersichten</span>
<span class="t" id="t20" style="font-size:11px;color:#000;letter-spacing:0.051px;left:79.53px;top:694px;">Aufträge</span>
<span class="t" id="t21" style="font-size:11px;color:#000;letter-spacing:-0.282px;left:74.41px;top:714px;">Meldungen</span>
<span class="t" id="t22" style="font-size:11px;color:#000;letter-spacing:-0.157px;left:68.42px;top:734px;">Kostenstellen</span>
<span class="t" id="t23" style="font-size:11px;color:#fff;letter-spacing:-0.114px;left:32.44px;top:325px;">Kurzfristige Erfolgsrechnung</span>
<span class="t" id="t24" style="font-size:11px;color:#fff;letter-spacing:-0.135px;left:59.73px;top:393px;">Betriebsergebnis</span>
<span class="t" id="t25" style="font-size:11px;color:#fff;letter-spacing:-0.177px;left:53.81px;top:461px;">Gewinn und Verlust</span>
<span class="t" id="t26" style="font-size:11px;color:#fff;letter-spacing:-0.445px;left:86.13px;top:529px;">Bilanz</span>
<span class="t" id="t27" style="font-size:11px;color:#fff;letter-spacing:-0.327px;left:59.34px;top:597px;">Bilanzkennzahlen</span>
<span class="t" id="t28" style="font-size:11px;color:#000;transform:rotate(-90deg);transform-origin:24.20px 6.00px;letter-spacing:0.01px;left:-11.2px;top:143.8px;">Allgemein</span>
<span class="t" id="t29" style="font-size:11px;color:#000;transform:rotate(-90deg);transform-origin:17.80px 6.00px;letter-spacing:-0.285px;left:-4.8px;top:198.4px;">Buchen</span>
<span class="t" id="t30" style="font-size:11px;color:#000;transform:rotate(-90deg);transform-origin:34.50px 6.00px;letter-spacing:-0.087px;left:-21.5px;top:263.5px;">Offene Posten</span>
<span class="t" id="t31" style="font-size:11px;color:#000;transform:rotate(-90deg);transform-origin:35.00px 6.00px;letter-spacing:-0.027px;left:-22.0px;top:345.7px;">Auswertungen</span>
<span class="t" id="t32" style="font-size:11px;color:#000;transform:rotate(-90deg);transform-origin:31.50px 6.00px;letter-spacing:0.062px;left:-18.5px;top:423.5px;">Stammdaten</span>
<span class="t" id="t33" style="font-size:11px;color:#000;letter-spacing:-0.089px;left:202.5px;top:122px;">Home: Startseite</span>
<span class="t" id="t34" style="font-size:11px;color:#000;letter-spacing:-0.15px;left:301.5px;top:122px;">BWA&#x27;s: Kurzfristige Erfolgsrechnung</span>
<span class="t" id="t35" style="font-size:11px;color:#3e4650;font-weight:bold;letter-spacing:0.172px;left:201px;top:148.6px;-webkit-text-stroke:0.3px #3e4650;">Erfolgsrechnung</span>
<span class="t" id="t36" style="font-size:11px;color:#000;letter-spacing:-0.014px;left:201px;top:172.6px;">Drucken...</span>
<span class="t" id="t37" style="font-size:11px;color:#34465e;letter-spacing:-0.522px;left:333.5px;top:172.6px;">F9</span>
<span class="t" id="t38" style="font-size:11px;color:#000;letter-spacing:-0.096px;left:201px;top:189px;">Analysieren in Excel...</span>
<span class="t" id="t39" style="font-size:11px;color:#3e4650;font-weight:bold;letter-spacing:0.641px;left:201px;top:220.6px;-webkit-text-stroke:0.3px #3e4650;">Zeitraum</span>
<span class="t" id="t40" style="font-size:11px;color:#000;letter-spacing:-0.061px;left:201px;top:244.8px;">Startdatum</span>
<span class="t" id="t41" style="font-size:11px;color:#000;letter-spacing:-0.129px;left:202.8px;top:262.7px;">Februar 2019</span>
<span class="t" id="t42" style="font-size:11px;color:#000;letter-spacing:-0.253px;left:201px;top:288.6px;">Anzahl Monate</span>
<span class="t" id="t43" style="font-size:11px;color:#000;left:203.5px;top:306.7px;">1</span>
<span class="t" id="t44" style="font-size:11px;color:#000;letter-spacing:-0.239px;left:218.5px;top:334px;">Mit Abschlußbuchungen</span>
<span class="t" id="t45" style="font-size:11px;color:#3e4650;font-weight:bold;letter-spacing:0.178px;left:201px;top:368.6px;-webkit-text-stroke:0.3px #3e4650;">Suchen</span>
<span class="t" id="t46" style="font-size:11px;color:#3e4650;font-weight:bold;letter-spacing:0.571px;left:201px;top:432.6px;-webkit-text-stroke:0.3px #3e4650;">Infodesk</span>
<span class="t" id="t47" style="font-size:11px;color:#000;letter-spacing:-0.117px;left:201px;top:457px;">Sachkontoblatt anzeigen</span>
<span class="t" id="t48" style="font-size:11px;color:#3e4650;font-weight:bold;letter-spacing:0.292px;left:201px;top:682.8px;-webkit-text-stroke:0.3px #3e4650;">Siehe auch</span>
<span class="t" id="t49" style="font-size:11px;color:#000;letter-spacing:-0.106px;left:201px;top:706.5px;">Positionen und Details...</span>
<span class="t" id="t50" style="font-size:11px;color:#000;letter-spacing:0.038px;left:201px;top:722.6px;">Weitere Auswertungen »</span>
<span class="t" id="t51" style="font-size:13px;color:#7d7d6d;font-weight:bold;left:387.36px;top:137px;">Position</span>
<span class="t" id="t52" style="font-size:13px;color:#808080;font-weight:bold;left:468.3px;top:137px;">Ordnungszahl</span>
<span class="t" id="t53" style="font-size:13px;color:#000;font-weight:bold;left:585.23px;top:137px;">Konto</span>
<span class="t" id="t54" style="font-size:13px;color:#000;font-weight:bold;left:741.49px;top:137px;">Kurztext</span>
<span class="t" id="t55" style="font-size:13px;color:#808080;font-weight:bold;left:915.92px;top:137px;">Typ</span>
<span class="t" id="t56" style="font-size:13px;color:#8b0000;font-weight:bold;left:954.14px;top:137px;">Vortrag Soll</span>
<span class="t" id="t57" style="font-size:13px;color:#8b0000;font-weight:bold;left:1039.58px;top:137px;">Soll</span>
<span class="t" id="t58" style="font-size:13px;color:#8b0000;font-weight:bold;left:1092.13px;top:137px;">Haben</span>
<span class="t" id="t59" style="font-size:13px;color:#8b0000;font-weight:bold;font-style:italic;left:1179.3px;top:137px;">Saldo</span>
<span class="t" id="t60" style="font-size:13px;color:#fff;left:384px;top:154.5px;">B01</span>
<span class="t" id="t61" style="font-size:13px;color:#000;letter-spacing:0.12px;left:447.6px;top:154.5px;">001. Gesamtleistung</span>
<span class="t" id="t62" style="font-size:13px;color:#000;left:589.24px;top:154.5px;">8000</span>
<span class="t" id="t63" style="font-size:13px;color:#000;letter-spacing:0.11px;left:631.6px;top:154.5px;">Umsatzerlöse</span>
<span class="t" id="t64" style="font-size:13px;color:#000;letter-spacing:0.25px;left:910.89px;top:154.5px;">H - S</span>
<span class="t" id="t65" style="font-size:13px;color:#000;left:384px;top:172.5px;">B01</span>
<span class="t" id="t66" style="font-size:13px;color:#000;letter-spacing:0.12px;left:447.6px;top:172.5px;">001. Gesamtleistung</span>
<span class="t" id="t67" style="font-size:13px;color:#000;left:589.24px;top:172.5px;">8060</span>
<span class="t" id="t68" style="font-size:13px;color:#000;letter-spacing:0.11px;left:631.6px;top:172.5px;">Umsatzerlöse</span>
<span class="t" id="t69" style="font-size:13px;color:#000;letter-spacing:0.25px;left:910.89px;top:172.5px;">H - S</span>
<span class="t" id="t70" style="font-size:13px;color:#000;left:384px;top:190.5px;">B01</span>
<span class="t" id="t71" style="font-size:13px;color:#000;letter-spacing:0.12px;left:447.6px;top:190.5px;">001. Gesamtleistung</span>
<span class="t" id="t72" style="font-size:13px;color:#000;left:589.24px;top:190.5px;">8100</span>
<span class="t" id="t73" style="font-size:13px;color:#000;letter-spacing:0.01px;left:631.6px;top:190.5px;">Steuerfreie Umsätze §4 Nr. 8ff UStG</span>
<span class="t" id="t74" style="font-size:13px;color:#000;letter-spacing:0.25px;left:910.89px;top:190.5px;">H - S</span>
<span class="t" id="t75" style="font-size:13px;color:#000;left:384px;top:208.5px;">B01</span>
<span class="t" id="t76" style="font-size:13px;color:#000;letter-spacing:0.12px;left:447.6px;top:208.5px;">001. Gesamtleistung</span>
<span class="t" id="t77" style="font-size:13px;color:#000;left:589.72px;top:208.5px;">8110</span>
<span class="t" id="t78" style="font-size:13px;color:#000;letter-spacing:0.01px;left:631.6px;top:208.5px;">Sonstige steuerfreie Umsätze Inland</span>
<span class="t" id="t79" style="font-size:13px;color:#000;letter-spacing:0.25px;left:910.89px;top:208.5px;">H - S</span>
<span class="t" id="t80" style="font-size:13px;color:#000;left:384px;top:226.5px;">B01</span>
<span class="t" id="t81" style="font-size:13px;color:#000;letter-spacing:0.12px;left:447.6px;top:226.5px;">001. Gesamtleistung</span>
<span class="t" id="t82" style="font-size:13px;color:#000;left:589.24px;top:226.5px;">8120</span>
<span class="t" id="t83" style="font-size:13px;color:#000;letter-spacing:-0.005px;left:631.6px;top:226.5px;">Steuerfreie Umsätze §4</span>
<span class="t" id="t84" style="font-size:13px;color:#000;letter-spacing:0.25px;left:910.89px;top:226.5px;">H - S</span>
<span class="t" id="t85" style="font-size:13px;color:#000;left:384px;top:244.5px;">B01</span>
<span class="t" id="t86" style="font-size:13px;color:#000;letter-spacing:0.12px;left:447.6px;top:244.5px;">001. Gesamtleistung</span>
<span class="t" id="t87" style="font-size:13px;color:#000;left:589.24px;top:244.5px;">8125</span>
<span class="t" id="t88" style="font-size:13px;color:#000;letter-spacing:-0.096px;left:631.6px;top:244.5px;">Steuerfreie innergemein. Lieferungen</span>
<span class="t" id="t89" style="font-size:13px;color:#000;letter-spacing:0.25px;left:910.89px;top:244.5px;">H - S</span>
<span class="t" id="t90" style="font-size:13px;color:#000;left:384px;top:262.5px;">B01</span>
<span class="t" id="t91" style="font-size:13px;color:#000;letter-spacing:0.12px;left:447.6px;top:262.5px;">001. Gesamtleistung</span>
<span class="t" id="t92" style="font-size:13px;color:#000;left:589.24px;top:262.5px;">8140</span>
<span class="t" id="t93" style="font-size:13px;color:#000;letter-spacing:-0.034px;left:631.6px;top:262.5px;">Steuerfreie Umsätze Offshore usw.</span>
<span class="t" id="t94" style="font-size:13px;color:#000;letter-spacing:0.25px;left:910.89px;top:262.5px;">H - S</span>
<span class="t" id="t95" style="font-size:13px;color:#000;left:384px;top:280.5px;">B01</span>
<span class="t" id="t96" style="font-size:13px;color:#000;letter-spacing:0.12px;left:447.6px;top:280.5px;">001. Gesamtleistung</span>
<span class="t" id="t97" style="font-size:13px;color:#000;left:589.24px;top:280.5px;">8150</span>
<span class="t" id="t98" style="font-size:13px;color:#000;letter-spacing:0.022px;left:631.6px;top:280.5px;">Sonstige steuerfreie Umsätze</span>
<span class="t" id="t99" style="font-size:13px;color:#000;letter-spacing:0.25px;left:910.89px;top:280.5px;">H - S</span>
<span class="t" id="t100" style="font-size:13px;color:#000;left:384px;top:298.5px;">B01</span>
<span class="t" id="t101" style="font-size:13px;color:#000;letter-spacing:0.12px;left:447.6px;top:298.5px;">001. Gesamtleistung</span>
<span class="t" id="t102" style="font-size:13px;color:#000;left:589.24px;top:298.5px;">8160</span>
<span class="t" id="t103" style="font-size:13px;color:#000;letter-spacing:0.12px;left:631.6px;top:298.5px;">St.freie Ums. ohne Vst.abzug Gesamtums.</span>
<span class="t" id="t104" style="font-size:13px;color:#000;letter-spacing:0.25px;left:910.89px;top:298.5px;">H - S</span>
<span class="t" id="t105" style="font-size:13px;color:#000;left:384px;top:316.5px;">B01</span>
<span class="t" id="t106" style="font-size:13px;color:#000;letter-spacing:0.12px;left:447.6px;top:316.5px;">001. Gesamtleistung</span>
<span class="t" id="t107" style="font-size:13px;color:#000;left:589.24px;top:316.5px;">8190</span>
<span class="t" id="t108" style="font-size:13px;color:#000;letter-spacing:0.052px;left:631.6px;top:316.5px;">Erlöse, Durchschn.sätze §24 UStG verst.</span>
<span class="t" id="t109" style="font-size:13px;color:#000;letter-spacing:0.25px;left:910.89px;top:316.5px;">H - S</span>
<span class="t" id="t110" style="font-size:13px;color:#000;left:384px;top:334.5px;">B01</span>
<span class="t" id="t111" style="font-size:13px;color:#000;letter-spacing:0.12px;left:447.6px;top:334.5px;">001. Gesamtleistung</span>
<span class="t" id="t112" style="font-size:13px;color:#000;left:589.24px;top:334.5px;">8191</span>
<span class="t" id="t113" style="font-size:13px;color:#000;letter-spacing:0.071px;left:631.6px;top:334.5px;">Umsatzerlöse §§ 25 &amp; 25a UStG 19% USt</span>
<span class="t" id="t114" style="font-size:13px;color:#000;letter-spacing:0.25px;left:910.89px;top:334.5px;">H - S</span>
<span class="t" id="t115" style="font-size:13px;color:#000;left:384px;top:352.5px;">B01</span>
<span class="t" id="t116" style="font-size:13px;color:#000;letter-spacing:0.12px;left:447.6px;top:352.5px;">001. Gesamtleistung</span>
<span class="t" id="t117" style="font-size:13px;color:#000;left:589.24px;top:352.5px;">8193</span>
<span class="t" id="t118" style="font-size:13px;color:#000;letter-spacing:0.028px;left:631.6px;top:352.5px;">Umsatzerlöse §§ 25 &amp; 25a UStG ohne USt</span>
<span class="t" id="t119" style="font-size:13px;color:#000;letter-spacing:0.25px;left:910.89px;top:352.5px;">H - S</span>
<span class="t" id="t120" style="font-size:13px;color:#000;left:384px;top:370.5px;">B01</span>
<span class="t" id="t121" style="font-size:13px;color:#000;letter-spacing:0.12px;left:447.6px;top:370.5px;">001. Gesamtleistung</span>
<span class="t" id="t122" style="font-size:13px;color:#000;left:589.24px;top:370.5px;">8195</span>
<span class="t" id="t123" style="font-size:13px;color:#000;letter-spacing:0.1px;left:631.6px;top:370.5px;">Erlöse Kleinuntern. i.S. §19 Abs.1 UStG</span>
<span class="t" id="t124" style="font-size:13px;color:#000;letter-spacing:0.25px;left:910.89px;top:370.5px;">H - S</span>
<span class="t" id="t125" style="font-size:13px;color:#000;left:384px;top:388.5px;">B01</span>
<span class="t" id="t126" style="font-size:13px;color:#000;letter-spacing:0.12px;left:447.6px;top:388.5px;">001. Gesamtleistung</span>
<span class="t" id="t127" style="font-size:13px;color:#000;left:589.24px;top:388.5px;">8196</span>
<span class="t" id="t128" style="font-size:13px;color:#000;letter-spacing:0.043px;left:631.6px;top:388.5px;">Erlöse aus Geldspielautomaten 19% USt</span>
<span class="t" id="t129" style="font-size:13px;color:#000;letter-spacing:0.25px;left:910.89px;top:388.5px;">H - S</span>
<span class="t" id="t130" style="font-size:13px;color:#000;left:384px;top:406.5px;">B01</span>
<span class="t" id="t131" style="font-size:13px;color:#000;letter-spacing:0.12px;left:447.6px;top:406.5px;">001. Gesamtleistung</span>
<span class="t" id="t132" style="font-size:13px;color:#000;left:589.24px;top:406.5px;">8200</span>
<span class="t" id="t133" style="font-size:13px;color:#000;letter-spacing:0.11px;left:631.6px;top:406.5px;">Erlöse</span>
<span class="t" id="t134" style="font-size:13px;color:#000;letter-spacing:0.25px;left:910.89px;top:406.5px;">H - S</span>
<span class="t" id="t135" style="font-size:13px;color:#000;left:384px;top:424.5px;">B01</span>
<span class="t" id="t136" style="font-size:13px;color:#000;letter-spacing:0.12px;left:447.6px;top:424.5px;">001. Gesamtleistung</span>
<span class="t" id="t137" style="font-size:13px;color:#000;left:589.24px;top:424.5px;">8300</span>
<span class="t" id="t138" style="font-size:13px;color:#000;letter-spacing:0.096px;left:631.6px;top:424.5px;">Erlöse ermäßigter Steuersatz</span>
<span class="t" id="t139" style="font-size:13px;color:#000;letter-spacing:0.25px;left:910.89px;top:424.5px;">H - S</span>
<span class="t" id="t140" style="font-size:13px;color:#000;left:384px;top:442.5px;">B01</span>
<span class="t" id="t141" style="font-size:13px;color:#000;letter-spacing:0.12px;left:447.6px;top:442.5px;">001. Gesamtleistung</span>
<span class="t" id="t142" style="font-size:13px;color:#000;left:589.24px;top:442.5px;">8315</span>
<span class="t" id="t143" style="font-size:13px;color:#000;letter-spacing:-0.013px;left:631.6px;top:442.5px;">Erlöse Inland steuerpf. EU-Lief. 19% USt</span>
<span class="t" id="t144" style="font-size:13px;color:#000;letter-spacing:0.25px;left:910.89px;top:442.5px;">H - S</span>
<span class="t" id="t145" style="font-size:13px;color:#000;left:384px;top:460.5px;">B01</span>
<span class="t" id="t146" style="font-size:13px;color:#000;letter-spacing:0.12px;left:447.6px;top:460.5px;">001. Gesamtleistung</span>
<span class="t" id="t147" style="font-size:13px;color:#000;left:589.24px;top:460.5px;">8320</span>
<span class="t" id="t148" style="font-size:13px;color:#000;letter-spacing:-0.003px;left:631.6px;top:460.5px;">Erlöse im and. EU-Land steuerpf. Liefer.</span>
<span class="t" id="t149" style="font-size:13px;color:#000;letter-spacing:0.25px;left:910.89px;top:460.5px;">H - S</span>
<span class="t" id="t150" style="font-size:13px;color:#000;left:384px;top:478.5px;">B01</span>
<span class="t" id="t151" style="font-size:13px;color:#000;letter-spacing:0.12px;left:447.6px;top:478.5px;">001. Gesamtleistung</span>
<span class="t" id="t152" style="font-size:13px;color:#000;left:589.24px;top:478.5px;">8325</span>
<span class="t" id="t153" style="font-size:13px;color:#000;letter-spacing:-0.003px;left:631.6px;top:478.5px;">Erlöse im EU-Land erm. steuerpf. Liefer.</span>
<span class="t" id="t154" style="font-size:13px;color:#000;letter-spacing:0.25px;left:910.89px;top:478.5px;">H - S</span>
<span class="t" id="t155" style="font-size:13px;color:#000;left:384px;top:496.5px;">B01</span>
<span class="t" id="t156" style="font-size:13px;color:#000;letter-spacing:0.12px;left:447.6px;top:496.5px;">001. Gesamtleistung</span>
<span class="t" id="t157" style="font-size:13px;color:#000;left:589.24px;top:496.5px;">8330</span>
<span class="t" id="t158" style="font-size:13px;color:#000;letter-spacing:-0.013px;left:631.6px;top:496.5px;">Erlöse Inland steuerpf. EU-Lief. 16% USt</span>
<span class="t" id="t159" style="font-size:13px;color:#000;letter-spacing:0.25px;left:910.89px;top:496.5px;">H - S</span>
<span class="t" id="t160" style="font-size:13px;color:#000;left:384px;top:514.5px;">B01</span>
<span class="t" id="t161" style="font-size:13px;color:#000;letter-spacing:0.12px;left:447.6px;top:514.5px;">001. Gesamtleistung</span>
<span class="t" id="t162" style="font-size:13px;color:#000;left:589.24px;top:514.5px;">8336</span>
<span class="t" id="t163" style="font-size:13px;color:#000;letter-spacing:0.079px;left:631.6px;top:514.5px;">EU-Leistungen mit St.schuldumkehr</span>
<span class="t" id="t164" style="font-size:13px;color:#000;letter-spacing:0.25px;left:910.89px;top:514.5px;">H - S</span>
<span class="t" id="t165" style="font-size:13px;color:#000;left:384px;top:532.5px;">B01</span>
<span class="t" id="t166" style="font-size:13px;color:#000;letter-spacing:0.12px;left:447.6px;top:532.5px;">001. Gesamtleistung</span>
<span class="t" id="t167" style="font-size:13px;color:#000;left:589.24px;top:532.5px;">8337</span>
<span class="t" id="t168" style="font-size:13px;color:#000;letter-spacing:0.11px;left:631.6px;top:532.5px;">Umsätze mit St.schuldumkehr § 13b UStG</span>
<span class="t" id="t169" style="font-size:13px;color:#000;letter-spacing:0.25px;left:910.89px;top:532.5px;">H - S</span>
<span class="t" id="t170" style="font-size:13px;color:#000;left:384px;top:550.5px;">B01</span>
<span class="t" id="t171" style="font-size:13px;color:#000;letter-spacing:0.12px;left:447.6px;top:550.5px;">001. Gesamtleistung</span>
<span class="t" id="t172" style="font-size:13px;color:#000;left:589.24px;top:550.5px;">8338</span>
<span class="t" id="t173" style="font-size:13px;color:#000;letter-spacing:0.061px;left:631.6px;top:550.5px;">Erl. Drittland st.bar, im Inland nicht</span>
<span class="t" id="t174" style="font-size:13px;color:#000;letter-spacing:0.25px;left:910.89px;top:550.5px;">H - S</span>
<span class="t" id="t175" style="font-size:13px;color:#000;left:384px;top:568.5px;">B01</span>
<span class="t" id="t176" style="font-size:13px;color:#000;letter-spacing:0.12px;left:447.6px;top:568.5px;">001. Gesamtleistung</span>
<span class="t" id="t177" style="font-size:13px;color:#000;left:589.24px;top:568.5px;">8340</span>
<span class="t" id="t178" style="font-size:13px;color:#000;letter-spacing:0.133px;left:631.6px;top:568.5px;">Erlöse 16%</span>
<span class="t" id="t179" style="font-size:13px;color:#000;letter-spacing:0.25px;left:910.89px;top:568.5px;">H - S</span>
<span class="t" id="t180" style="font-size:13px;color:#000;left:384px;top:586.5px;">B01</span>
<span class="t" id="t181" style="font-size:13px;color:#000;letter-spacing:0.12px;left:447.6px;top:586.5px;">001. Gesamtleistung</span>
<span class="t" id="t182" style="font-size:13px;color:#000;left:589.24px;top:586.5px;">8400</span>
<span class="t" id="t183" style="font-size:13px;color:#000;letter-spacing:0.083px;left:631.6px;top:586.5px;">Erlöse Normalsteuersatz</span>
<span class="t" id="t184" style="font-size:13px;color:#000;letter-spacing:0.25px;left:910.89px;top:586.5px;">H - S</span>
<span class="t" id="t185" style="font-size:13px;color:#000;left:1082.81px;top:586.5px;">63.314,31 €</span>
<span class="t" id="t186" style="font-size:13px;color:#000;left:1167.81px;top:586.5px;">63.314,31 €</span>
<span class="t" id="t187" style="font-size:13px;color:#000;left:384px;top:604.5px;">B01</span>
<span class="t" id="t188" style="font-size:13px;color:#000;letter-spacing:0.12px;left:447.6px;top:604.5px;">001. Gesamtleistung</span>
<span class="t" id="t189" style="font-size:13px;color:#000;left:589.24px;top:604.5px;">8410</span>
<span class="t" id="t190" style="font-size:13px;color:#000;letter-spacing:0.133px;left:631.6px;top:604.5px;">Erlöse 19%</span>
<span class="t" id="t191" style="font-size:13px;color:#000;letter-spacing:0.25px;left:910.89px;top:604.5px;">H - S</span>
<span class="t" id="t192" style="font-size:13px;color:#000;left:384px;top:622.5px;">B01</span>
<span class="t" id="t193" style="font-size:13px;color:#000;letter-spacing:0.12px;left:447.6px;top:622.5px;">001. Gesamtleistung</span>
<span class="t" id="t194" style="font-size:13px;color:#000;left:589.24px;top:622.5px;">8514</span>
<span class="t" id="t195" style="font-size:13px;color:#000;letter-spacing:0.049px;left:631.6px;top:622.5px;">Provisionsums., st.frei § 4 Nr. 8ff UStG</span>
<span class="t" id="t196" style="font-size:13px;color:#000;letter-spacing:0.25px;left:910.89px;top:622.5px;">H - S</span>
<span class="t" id="t197" style="font-size:13px;color:#000;left:384px;top:640.5px;">B01</span>
<span class="t" id="t198" style="font-size:13px;color:#000;letter-spacing:0.12px;left:447.6px;top:640.5px;">001. Gesamtleistung</span>
<span class="t" id="t199" style="font-size:13px;color:#000;left:589.24px;top:640.5px;">8515</span>
<span class="t" id="t200" style="font-size:13px;color:#000;letter-spacing:0.083px;left:631.6px;top:640.5px;">Provisionsums., st.frei § 4 Nr. 5 UStG</span>
<span class="t" id="t201" style="font-size:13px;color:#000;letter-spacing:0.25px;left:910.89px;top:640.5px;">H - S</span>
<span class="t" id="t202" style="font-size:13px;color:#000;left:384px;top:658.5px;">B01</span>
<span class="t" id="t203" style="font-size:13px;color:#000;letter-spacing:0.12px;left:447.6px;top:658.5px;">001. Gesamtleistung</span>
<span class="t" id="t204" style="font-size:13px;color:#000;left:589.24px;top:658.5px;">8516</span>
<span class="t" id="t205" style="font-size:13px;color:#000;letter-spacing:0.04px;left:631.6px;top:658.5px;">Provisionsumsätze 7% USt</span>
<span class="t" id="t206" style="font-size:13px;color:#000;letter-spacing:0.25px;left:910.89px;top:658.5px;">H - S</span>
<span class="t" id="t207" style="font-size:13px;color:#000;left:384px;top:676.5px;">B01</span>
<span class="t" id="t208" style="font-size:13px;color:#000;letter-spacing:0.12px;left:447.6px;top:676.5px;">001. Gesamtleistung</span>
<span class="t" id="t209" style="font-size:13px;color:#000;left:589.24px;top:676.5px;">8520</span>
<span class="t" id="t210" style="font-size:13px;color:#000;letter-spacing:-0.117px;left:631.6px;top:676.5px;">Erlöse Abfallverwertung</span>
<span class="t" id="t211" style="font-size:13px;color:#000;letter-spacing:0.25px;left:910.89px;top:676.5px;">H - S</span>
<span class="t" id="t212" style="font-size:13px;color:#000;left:384px;top:694.5px;">B01</span>
<span class="t" id="t213" style="font-size:13px;color:#000;letter-spacing:0.12px;left:447.6px;top:694.5px;">001. Gesamtleistung</span>
<span class="t" id="t214" style="font-size:13px;color:#000;left:589.24px;top:694.5px;">8700</span>
<span class="t" id="t215" style="font-size:13px;color:#000;letter-spacing:-0.007px;left:631.6px;top:694.5px;">Erlösschmälerungen</span>
<span class="t" id="t216" style="font-size:13px;color:#000;letter-spacing:0.25px;left:910.89px;top:694.5px;">H - S</span>
<span class="t" id="t217" style="font-size:13px;color:#000;left:384px;top:712.5px;">B01</span>
<span class="t" id="t218" style="font-size:13px;color:#000;letter-spacing:0.12px;left:447.6px;top:712.5px;">001. Gesamtleistung</span>
<span class="t" id="t219" style="font-size:13px;color:#000;left:589.24px;top:712.5px;">8710</span>
<span class="t" id="t220" style="font-size:13px;color:#000;letter-spacing:0.049px;left:631.6px;top:712.5px;">Erlösschmälerungen ermäßigter Steuersatz</span>
<span class="t" id="t221" style="font-size:13px;color:#000;letter-spacing:0.25px;left:910.89px;top:712.5px;">H - S</span>
<span class="t" id="t222" style="font-size:11px;color:#000;letter-spacing:-0.204px;left:407.5px;top:735px;">SQL TOP 1000 Datensatz 1 von 49 gelesenen</span>
<span class="t" id="t223" style="font-size:11px;color:#000;letter-spacing:0.033px;left:1054.5px;top:754.5px;">02/2019</span>
<span class="t" id="t224" style="font-size:11px;color:#000;letter-spacing:-1.021px;left:1110.5px;top:754.5px;">NUM</span>
<span class="t" id="t225" style="font-size:12px;color:#000;letter-spacing:-0.091px;left:1148.2px;top:755px;">admin - Mosaik.mdb</span>
</body></html>
